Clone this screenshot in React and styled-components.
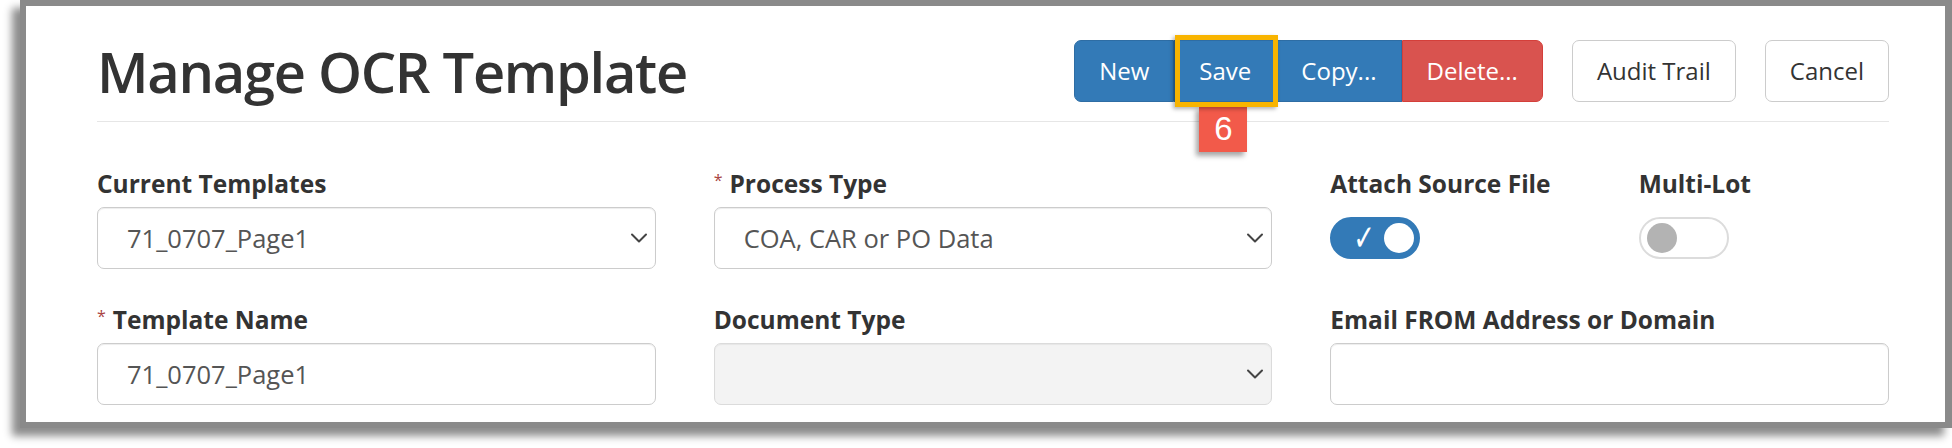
import React from "react";
import styled, { createGlobalStyle, css } from "styled-components";
import { ChevronDown } from "lucide-react";

const GlobalStyle = createGlobalStyle`
  html, body {
    margin: 0;
    padding: 0;
    background: #fff;
  }
  body {
    font-family: "Open Sans", "Noto Sans", Arial, sans-serif;
    color: #333;
  }
`;

const Stage = styled.div`
  width: 1952px;
  height: 448px;
  padding-left: 20px;
  box-sizing: border-box;
  overflow: hidden;
`;

const Frame = styled.div`
  box-sizing: border-box;
  height: 428px;
  border: 6px solid #8a8a8a;
  border-right-width: 7px;
  background: #fff;
  box-shadow: -8px 8px 8px rgba(0, 0, 0, 0.45);
  padding: 0 56px 0 71px;
`;

const Header = styled.header`
  display: flex;
  justify-content: space-between;
  align-items: center;
  padding: 34px 0 19px;
  border-bottom: 1px solid #e6e6e6;
`;

const Title = styled.h1`
  margin: 0;
  font-size: 56px;
  font-weight: 600;
  line-height: 62px;
  letter-spacing: -1.3px;
  color: #333;
`;

const Toolbar = styled.div`
  display: flex;
  align-items: center;
  gap: 29px;
`;

const ButtonGroup = styled.div`
  display: flex;
`;

const variants = {
  primary: css`
    background: #337ab7;
    border-color: #2e6da4;
    color: #fff;
  `,
  danger: css`
    background: #d9534f;
    border-color: #d43f3a;
    color: #fff;
  `,
  default: css`
    background: #fff;
    border-color: #ccc;
    color: #333;
  `,
};

const radii = {
  first: "7px 0 0 7px",
  middle: "0",
  last: "0 7px 7px 0",
  single: "7px",
};

const Button = styled.button`
  box-sizing: border-box;
  height: 62px;
  padding: 0 24px;
  border: 1px solid;
  border-radius: ${(p) => radii[p.$pos || "single"]};
  font-family: inherit;
  font-size: 24px;
  line-height: 1;
  cursor: pointer;
  ${(p) => variants[p.$variant || "default"]}
`;

const Marked = styled.div`
  position: relative;
  display: flex;
`;

const Highlight = styled.span`
  position: absolute;
  top: -5px;
  bottom: -5px;
  left: 1px;
  right: -2px;
  border: 5px solid #f8b400;
  box-shadow: -2px 2px 4px rgba(0, 0, 0, 0.3);
  pointer-events: none;
`;

const StepBadge = styled.span`
  position: absolute;
  top: 66px;
  left: 25px;
  width: 48px;
  height: 46px;
  display: flex;
  align-items: center;
  justify-content: center;
  background: #f25a4a;
  color: #fff;
  font-family: "Liberation Sans", Arial, sans-serif;
  font-size: 33px;
  box-shadow: -3px 4px 5px rgba(0, 0, 0, 0.35);
`;

const Form = styled.div`
  display: grid;
  grid-template-columns: repeat(3, 1fr);
  column-gap: 58px;
  row-gap: 34px;
  padding-top: 45px;
`;

const Pair = styled.div`
  display: grid;
  grid-template-columns: 1fr 1fr;
  column-gap: 58px;
`;

const Field = styled.div`
  display: flex;
  flex-direction: column;
`;

const Label = styled.label`
  display: block;
  margin-bottom: 6px;
  font-size: 24.5px;
  font-weight: 700;
  line-height: 34px;
  color: #333;
  white-space: nowrap;
`;

const Required = styled.span`
  color: #a94442;
  font-size: 16px;
  font-weight: 400;
  vertical-align: top;
  line-height: 26px;
  margin-right: 7px;
`;

const controlBase = css`
  box-sizing: border-box;
  width: 100%;
  height: 62px;
  border: 1px solid #ccc;
  border-radius: 7px;
  padding: 0 29px;
  font-family: inherit;
  font-size: 25.5px;
  color: #555;
  box-shadow: inset 0 1px 1px rgba(0, 0, 0, 0.075);
  outline: none;
`;

const SelectWrap = styled.div`
  position: relative;
`;

const Select = styled.select`
  ${controlBase}
  appearance: none;
  padding-right: 56px;
  background: ${(p) => (p.disabled ? "#eee" : "#fff")};
`;

const Caret = styled(ChevronDown)`
  position: absolute;
  right: 3px;
  top: 50%;
  transform: translateY(-50%);
  color: #444;
  pointer-events: none;
`;

const Input = styled.input`
  ${controlBase}
  background: #fff;
`;

const SwitchSlot = styled.div`
  height: 62px;
  display: flex;
  align-items: center;
`;

const Switch = styled.button`
  box-sizing: border-box;
  width: 90px;
  height: 42px;
  border-radius: 21px;
  border: 2px solid ${(p) => (p.$on ? "#337ab7" : "#dcdcdc")};
  background: ${(p) => (p.$on ? "#337ab7" : "#fff")};
  display: flex;
  align-items: center;
  justify-content: ${(p) => (p.$on ? "space-between" : "flex-start")};
  padding: ${(p) => (p.$on ? "0 4px 0 17px" : "0 6px")};
  cursor: pointer;
`;

const Check = styled.span`
  color: #fff;
  font-family: "DejaVu Sans", sans-serif;
  font-size: 36px;
  line-height: 1;
  transform: scaleX(0.72);
`;

const Knob = styled.span`
  width: 30px;
  height: 30px;
  border-radius: 50%;
  background: ${(p) => (p.$on ? "#fff" : "#b3b3b3")};
`;

const SelectField = ({ label, required, value, disabled }) => (
  <Field>
    <Label>
      {required && <Required>*</Required>}
      {label}
    </Label>
    <SelectWrap>
      <Select value={value} disabled={disabled} onChange={() => {}}>
        <option value={value}>{value}</option>
      </Select>
      <Caret size={28} strokeWidth={1.7} />
    </SelectWrap>
  </Field>
);

const TextField = ({ label, required, value }) => (
  <Field>
    <Label>
      {required && <Required>*</Required>}
      {label}
    </Label>
    <Input value={value} onChange={() => {}} />
  </Field>
);

const SwitchField = ({ label, on }) => (
  <Field>
    <Label>{label}</Label>
    <SwitchSlot>
      <Switch $on={on} role="switch" aria-checked={on}>
        {on && <Check>✓</Check>}
        <Knob $on={on} />
      </Switch>
    </SwitchSlot>
  </Field>
);

export default function App() {
  return (
    <Stage>
      <GlobalStyle />
      <Frame>
        <Header>
          <Title>Manage OCR Template</Title>
          <Toolbar>
            <ButtonGroup>
              <Button $variant="primary" $pos="first">
                New
              </Button>
              <Marked>
                <Button $variant="primary" $pos="middle">
                  Save
                </Button>
                <StepBadge>6</StepBadge>
                <Highlight />
              </Marked>
              <Button $variant="primary" $pos="middle">
                Copy...
              </Button>
              <Button $variant="danger" $pos="last">
                Delete...
              </Button>
            </ButtonGroup>
            <Button>Audit Trail</Button>
            <Button>Cancel</Button>
          </Toolbar>
        </Header>
        <Form>
          <SelectField label="Current Templates" value="71_0707_Page1" />
          <SelectField label="Process Type" required value="COA, CAR or PO Data" />
          <Pair>
            <SwitchField label="Attach Source File" on />
            <SwitchField label="Multi-Lot" on={false} />
          </Pair>
          <TextField label="Template Name" required value="71_0707_Page1" />
          <SelectField label="Document Type" value="" disabled />
          <TextField label="Email FROM Address or Domain" value="" />
        </Form>
      </Frame>
    </Stage>
  );
}
